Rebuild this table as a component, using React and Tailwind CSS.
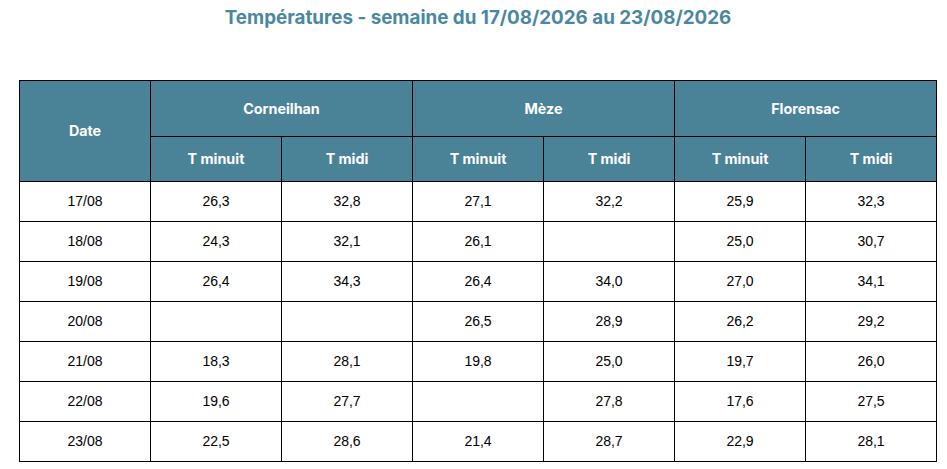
import React from "react";

const rows = [
  ["17/08", "26,3", "32,8", "27,1", "32,2", "25,9", "32,3"],
  ["18/08", "24,3", "32,1", "26,1", "", "25,0", "30,7"],
  ["19/08", "26,4", "34,3", "26,4", "34,0", "27,0", "34,1"],
  ["20/08", "", "", "26,5", "28,9", "26,2", "29,2"],
  ["21/08", "18,3", "28,1", "19,8", "25,0", "19,7", "26,0"],
  ["22/08", "19,6", "27,7", "", "27,8", "17,6", "27,5"],
  ["23/08", "22,5", "28,6", "21,4", "28,7", "22,9", "28,1"],
];

const th = "border border-black bg-[#4a8297] text-white font-bold text-[14.3px] text-center p-0";

export default function App() {
  return (
    <div className="w-[947px] h-[469px] bg-white pl-[19px] pt-[6px]">
      <h1 className="w-[918px] text-center text-[18.8px] leading-[24px] font-bold text-[#4a87a0] font-['Inter',sans-serif]">
        Températures - semaine du 17/08/2026 au 23/08/2026
      </h1>
      <table className="mt-[50px] w-[918px] table-fixed border-collapse">
        <colgroup>
          {Array.from({ length: 7 }).map((_, i) => (
            <col key={i} className="w-[131px]" />
          ))}
        </colgroup>
        <thead className="font-['Inter',sans-serif]">
          <tr className="h-[56px]">
            <th rowSpan={2} className={th}>Date</th>
            <th colSpan={2} className={th}>Corneilhan</th>
            <th colSpan={2} className={th}>Mèze</th>
            <th colSpan={2} className={th}>Florensac</th>
          </tr>
          <tr className="h-[45px]">
            <th className={th}>T minuit</th>
            <th className={th}>T midi</th>
            <th className={th}>T minuit</th>
            <th className={th}>T midi</th>
            <th className={th}>T minuit</th>
            <th className={th}>T midi</th>
          </tr>
        </thead>
        <tbody className="font-['Liberation_Sans',Arial,sans-serif] text-[14px] text-black">
          {rows.map((r) => (
            <tr key={r[0]} className="h-[40px]">
              {r.map((c, j) => (
                <td key={j} className="border border-black text-center p-0">
                  {c}
                </td>
              ))}
            </tr>
          ))}
        </tbody>
      </table>
    </div>
  );
}
